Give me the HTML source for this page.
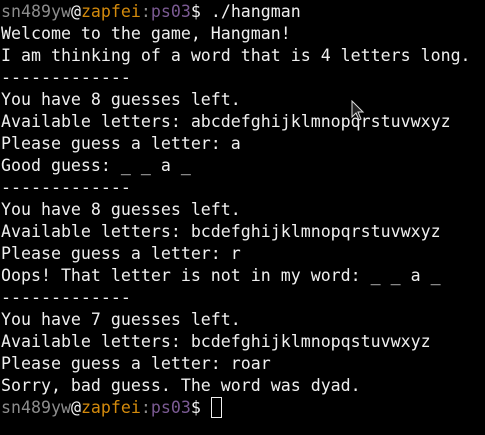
<!DOCTYPE html>
<html><head><style>
html,body{margin:0;padding:0;background:#000;width:485px;height:435px;overflow:hidden}
pre{margin:0;padding:1px 0 0 1px;font-family:"DejaVu Sans Mono","Liberation Mono",monospace;font-size:16.6px;line-height:22px;color:#f0f0f0}
.u{color:#8c8c8c}.h{color:#d38a0c}.c{color:#8c8c8c}.p{color:#7b5a93}
.cur{display:inline-block;width:9px;height:19px;border:1px solid #f0f0f0;vertical-align:-5px}
</style></head><body>
<pre><span class="u">sn489yw</span>@<span class="h">zapfei</span><span class="c">:</span><span class="p">ps03</span>$ ./hangman
Welcome to the game, Hangman!
I am thinking of a word that is 4 letters long.
-------------
You have 8 guesses left.
Available letters: abcdefghijklmnopqrstuvwxyz
Please guess a letter: a
Good guess: _ _ a _
-------------
You have 8 guesses left.
Available letters: bcdefghijklmnopqrstuvwxyz
Please guess a letter: r
Oops! That letter is not in my word: _ _ a _
-------------
You have 7 guesses left.
Available letters: bcdefghijklmnopqstuvwxyz
Please guess a letter: roar
Sorry, bad guess. The word was dyad.
<span class="u">sn489yw</span>@<span class="h">zapfei</span><span class="c">:</span><span class="p">ps03</span>$ <span class="cur"></span></pre>
<svg style="position:absolute;left:351px;top:100px" width="14" height="22"><path d="M1 1 L1 17 L5 13 L8 20 L10 19 L7 12 L12 12 Z" fill="#222" stroke="#ddd" stroke-width="1"/></svg>
</body></html>
